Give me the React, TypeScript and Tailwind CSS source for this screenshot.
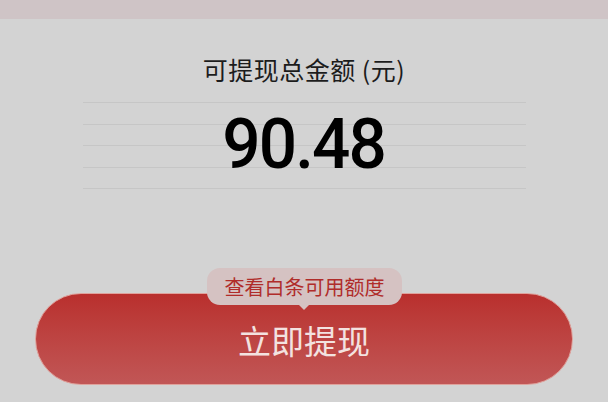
import React from "react";

const cjk = {
  fontFamily: '"Noto Sans CJK SC", "Noto Sans", sans-serif',
};

const Lines: React.FC = () => (
  <div className="relative mx-auto mt-[18px] w-[443px]">
    {[0, 1, 2, 3].map((i) => (
      <div key={i} className="h-[21.5px] border-t border-[#c6c6c6]" />
    ))}
    <div className="border-t border-[#c6c6c6]" />
    <div
      className="absolute inset-x-0 top-[-3px] flex justify-center text-[71px] font-medium leading-[90px] tracking-[-2px] text-black"
      style={{ fontFamily: "Roboto, sans-serif" }}
    >
      <span className="inline-block scale-x-[0.95]">90.48</span>
    </div>
  </div>
);

export default function App() {
  return (
    <div className="flex h-[402px] w-[608px] flex-col overflow-hidden bg-[#d3d3d3]" style={cjk}>
      <div className="h-[19px] bg-[#cfc4c6]" />
      <div className="mt-[35px] text-center text-[25px] leading-[30px] tracking-[0.5px] text-[#1c1c1c]">
        可提现总金额 (元)
      </div>
      <Lines />
      <div className="relative mx-[35px] mt-[104px]">
        <button className="flex h-[92px] w-full items-center justify-center rounded-full border border-[#dfa29c] bg-gradient-to-b from-[#b92f2d] to-[#c15656] pt-[3px] text-[33px] text-[#f3e2e0]">
          立即提现
        </button>
        <div className="absolute left-[172px] top-[-25px] flex h-[37px] w-[195px] items-center justify-center rounded-[13px] bg-[#d5c2c2] text-[20px] text-[#b02c2a]">
          查看白条可用额度
          <div className="absolute bottom-[-5px] left-[91px] h-0 w-0 border-x-[6px] border-t-[6px] border-x-transparent border-t-[#d5c2c2]" />
        </div>
      </div>
    </div>
  );
}
